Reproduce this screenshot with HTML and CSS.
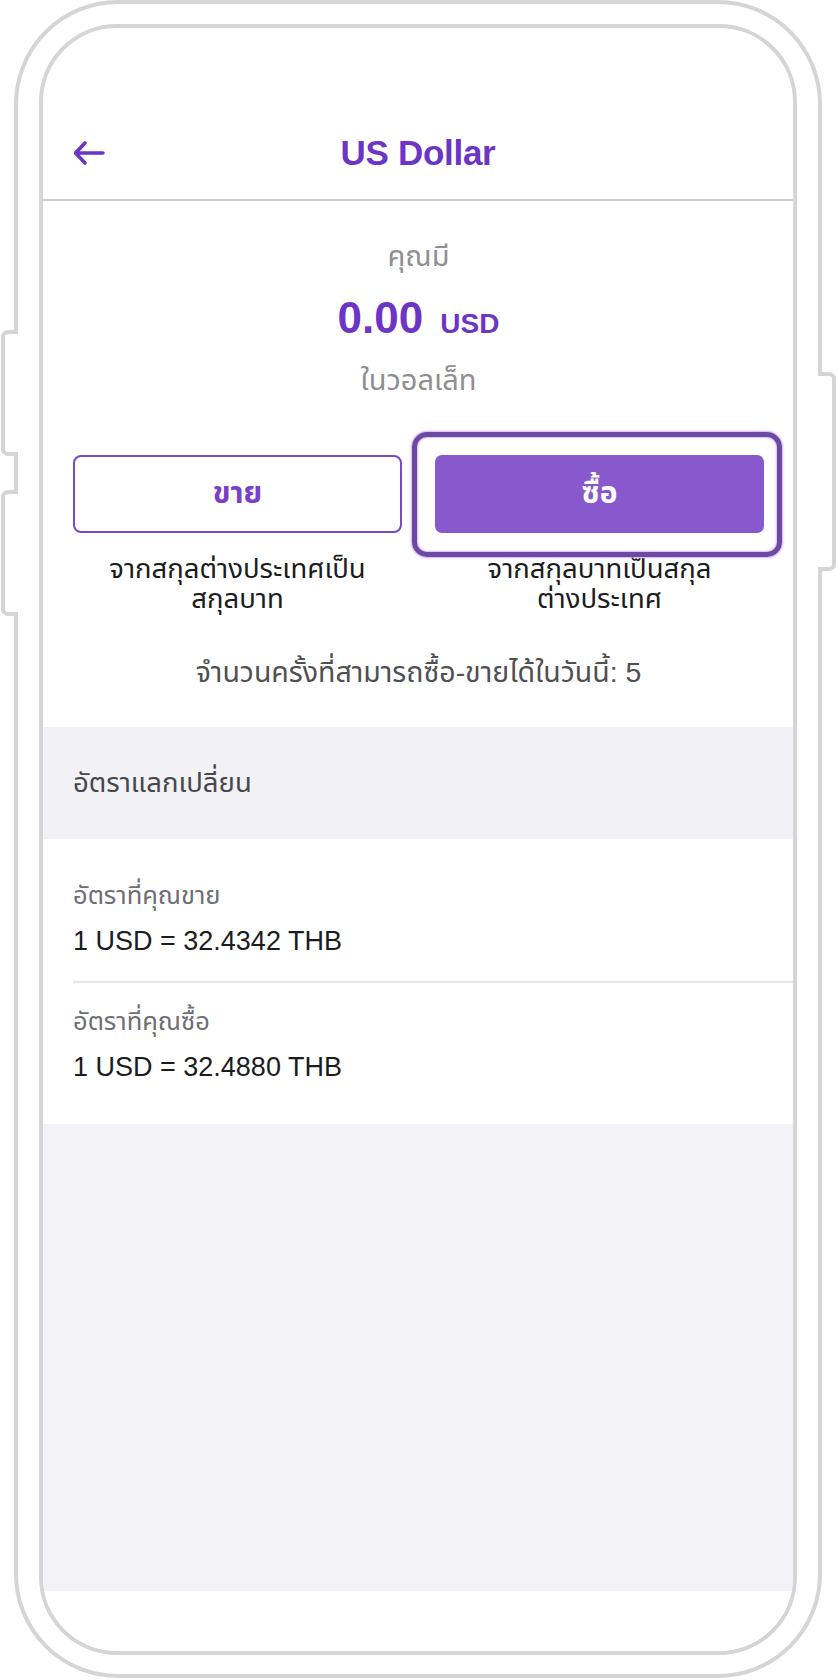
FILE: index.html
```html
<!DOCTYPE html>
<html lang="th">
<head>
<meta charset="utf-8">
<title>US Dollar</title>
<link rel="stylesheet" href="styles.css">
</head>
<body>
<div class="device">
  <div class="side-btn side-l1"></div>
  <div class="side-btn side-l2"></div>
  <div class="side-btn side-r"></div>
  <div class="phone">
    <div class="screen">
      <header class="topbar">
        <div class="back">
          <svg width="34" height="26" viewBox="0 0 34 26" aria-hidden="true">
            <path d="M31 13H4M13 3L3.5 13L13 23" fill="none" stroke="#6a35c4" stroke-width="3.6" stroke-linecap="round" stroke-linejoin="round"/>
          </svg>
        </div>
        <h1 class="title">US Dollar</h1>
        <div></div>
      </header>

      <section class="balance">
        <p class="muted">คุณมี</p>
        <p class="amount"><span class="num">0.00</span><span class="cur">USD</span></p>
        <p class="muted">ในวอลเล็ท</p>

        <div class="actions">
          <div class="action">
            <button class="btn btn-outline">ขาย</button>
            <p class="caption">จากสกุลต่างประเทศเป็น<br>สกุลบาท</p>
          </div>
          <div class="action">
            <div class="btn-wrap">
              <button class="btn btn-fill">ซื้อ</button>
              <div class="focus-ring"></div>
            </div>
            <p class="caption">จากสกุลบาทเป็นสกุล<br>ต่างประเทศ</p>
          </div>
        </div>

        <p class="count">จำนวนครั้งที่สามารถซื้อ-ขายได้ในวันนี้: 5</p>
      </section>

      <div class="section-head">อัตราแลกเปลี่ยน</div>

      <div class="rates">
        <div class="rate">
          <p class="rate-label">อัตราที่คุณขาย</p>
          <p class="rate-value">1 USD = 32.4342 THB</p>
        </div>
        <div class="rate">
          <p class="rate-label">อัตราที่คุณซื้อ</p>
          <p class="rate-value">1 USD = 32.4880 THB</p>
        </div>
      </div>

      <div class="filler"></div>
      <div class="bottom-white"></div>
    </div>
  </div>
</div>
</body>
</html>
```

FILE: styles.css
```css
* { box-sizing: border-box; }

html, body {
  margin: 0;
  padding: 0;
  background: #ffffff;
}

body {
  font-family: "Liberation Sans", "Noto Sans Thai", "Noto Sans Thai UI", "Loma", "Garuda", "Waree", "Sawasdee", "Noto Sans", sans-serif;
  color: #1c1c1e;
  width: 837px;
  height: 1680px;
  overflow: hidden;
}

p { margin: 0; }

.device {
  position: relative;
  width: 837px;
  height: 1680px;
  padding-left: 14px;
}

.phone {
  width: 808px;
  height: 1678px;
  border: 4px solid #d4d5d7;
  border-radius: 104px;
  padding: 20px 21px 19px 21px;
  background: #fff;
}

.side-btn {
  position: absolute;
  background: #fff;
  border: 4px solid #d4d5d7;
  z-index: 2;
}
.side-l1, .side-l2 {
  left: 1px;
  width: 17px;
  border-right: none;
  border-radius: 7px 0 0 7px;
}
.side-l1 { top: 330px; height: 126px; }
.side-l2 { top: 490px; height: 126px; }
.side-r {
  left: 818px;
  width: 18px;
  top: 372px;
  height: 199px;
  border-left: none;
  border-radius: 0 7px 7px 0;
}

.screen {
  width: 100%;
  height: 100%;
  border: 4px solid #d4d5d7;
  border-radius: 78px;
  overflow: hidden;
  display: flex;
  flex-direction: column;
  background: #fff;
}

/* Header */
.topbar {
  height: 173px;
  flex: none;
  display: grid;
  grid-template-columns: 1fr auto 1fr;
  align-items: center;
  align-content: end;
  padding: 0 29px 22px 29px;
  border-bottom: 2px solid #cdcdd1;
}
.topbar > * { height: 48px; display: flex; align-items: center; }
.back svg { display: block; }
.title {
  margin: 0;
  font-size: 35px;
  font-weight: 700;
  color: #6c35c6;
  letter-spacing: -0.3px;
}

/* Balance */
.balance {
  flex: none;
  padding: 39px 29px 39px 30px;
  display: flex;
  flex-direction: column;
  align-items: center;
}
.muted {
  font-size: 29px;
  line-height: 32px;
  color: #8e8e93;
}
.amount {
  margin: 20px 0;
  line-height: 52px;
  height: 52px;
  display: flex;
  align-items: baseline;
  gap: 17px;
  color: #6c35c6;
  font-weight: 700;
}
.amount .num { font-size: 44px; }
.amount .cur { font-size: 28px; }

.actions {
  margin-top: 59px;
  width: 100%;
  display: grid;
  grid-template-columns: 1fr 1fr;
  column-gap: 33px;
}
.action {
  display: flex;
  flex-direction: column;
  align-items: center;
}
.btn-wrap { position: relative; width: 100%; }
.btn {
  display: block;
  width: 100%;
  height: 78px;
  font-family: inherit;
  font-size: 30px;
  font-weight: 700;
  border-radius: 8px;
  cursor: pointer;
}
.btn-outline {
  background: #fff;
  border: 2px solid #7b48c8;
  color: #7a3fc6;
}
.btn-fill {
  background: #8858cd;
  border: none;
  color: #fff;
  border-radius: 7px;
}
.focus-ring {
  position: absolute;
  left: -23px;
  right: -18px;
  top: -23px;
  bottom: -24px;
  border: 5px solid #6b4aa3;
  border-radius: 15px;
  box-shadow: 0 0 2px 1px rgba(214, 160, 240, 0.9), inset 0 0 2px 1px rgba(214, 160, 240, 0.8);
  pointer-events: none;
}
.caption {
  margin-top: 21px;
  font-size: 27.5px;
  line-height: 30px;
  text-align: center;
  color: #1c1c1e;
}
.count {
  margin-top: 42px;
  font-size: 28.5px;
  line-height: 32px;
  color: #4f4f54;
  text-align: center;
}

/* Section head */
.section-head {
  flex: none;
  height: 112px;
  background: #f2f1f5;
  display: flex;
  align-items: center;
  padding-left: 30px;
  font-size: 27.5px;
  color: #48484c;
}

/* Rates */
.rates {
  flex: none;
  padding: 18px 0 17px 30px;
  background: #fff;
}
.rate {
  padding: 23px 0;
  display: flex;
  flex-direction: column;
  gap: 14px;
}
.rate + .rate { border-top: 2px solid #e6e6ea; }
.rate-label {
  font-size: 25.5px;
  line-height: 30px;
  color: #6e6e73;
}
.rate-value {
  font-size: 27px;
  line-height: 34px;
  color: #1c1c1e;
}

.filler {
  flex: 1;
  background: #f3f2f6;
}
.bottom-white {
  flex: none;
  height: 60px;
  background: #fff;
}
```
